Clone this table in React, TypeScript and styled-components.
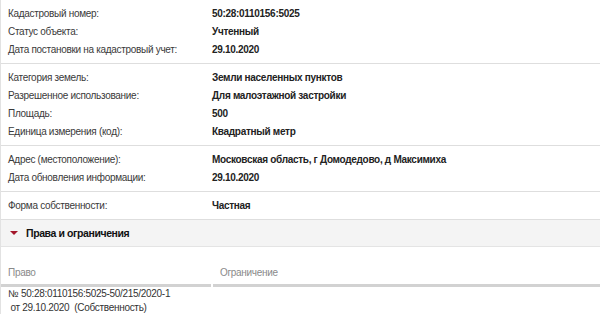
import React from 'react';
import styled, { createGlobalStyle } from 'styled-components';

const GlobalStyle = createGlobalStyle`
    body {
        margin: 0;
        background: #fff;
        font-family: 'Liberation Sans', Arial, sans-serif;
        letter-spacing: -0.3px;
    }
`;

const Page = styled.div`
    border-left: 1px solid #e2e2e2;
    width: 600px;
    box-sizing: border-box;
`;

const Group = styled.div`
    border-bottom: 1px solid #dedede;
    padding: 4px 0 5px;
`;

const Row = styled.div`
    display: grid;
    grid-template-columns: 204px 1fr;
    align-items: center;
    height: 18px;
    padding-left: 7px;
    font-size: 10px;
`;

const Label = styled.span`
    color: #3a3a3a;
`;

const Value = styled.span`
    color: #222;
    font-weight: bold;
`;

const SectionHeader = styled.div`
    display: flex;
    align-items: center;
    gap: 8px;
    height: 26px;
    padding-left: 9px;
    background: #f4f4f4;
    border-bottom: 1px solid #e4e4e4;
    font-size: 10.5px;
    letter-spacing: -0.4px;
    font-weight: bold;
    color: #111;
`;

const Triangle = styled.span`
    width: 0;
    height: 0;
    border-left: 4px solid transparent;
    border-right: 4px solid transparent;
    border-top: 4px solid #a3162a;
`;

const Table = styled.div`
    display: grid;
    grid-template-columns: 210px 1fr;
    column-gap: 2px;
    padding-top: 19px;
    font-size: 10px;
`;

const HeadCell = styled.div`
    color: #8a8a8a;
    padding: 0 0 4px 7px;
    line-height: 14px;
    border-bottom: 3px solid #d2d2d2;
`;

const Cell = styled.div`
    color: #333;
    padding: 0 0 3px 7px;
    line-height: 14px;
    border-bottom: 1px solid #dedede;
    white-space: pre;
`;

type Item = [string, string];

const groups: Item[][] = [
    [
        ['Кадастровый номер:', '50:28:0110156:5025'],
        ['Статус объекта:', 'Учтенный'],
        ['Дата постановки на кадастровый учет:', '29.10.2020'],
    ],
    [
        ['Категория земель:', 'Земли населенных пунктов'],
        ['Разрешенное использование:', 'Для малоэтажной застройки'],
        ['Площадь:', '500'],
        ['Единица измерения (код):', 'Квадратный метр'],
    ],
    [
        ['Адрес (местоположение):', 'Московская область, г Домодедово, д Максимиха'],
        ['Дата обновления информации:', '29.10.2020'],
    ],
    [['Форма собственности:', 'Частная']],
];

const App: React.FC = () => (
    <>
        <GlobalStyle />
        <Page>
            {groups.map((g, i) => (
                <Group key={i}>
                    {g.map(([label, value]) => (
                        <Row key={label}>
                            <Label>{label}</Label>
                            <Value>{value}</Value>
                        </Row>
                    ))}
                </Group>
            ))}
            <SectionHeader>
                <Triangle />
                Права и ограничения
            </SectionHeader>
            <Table>
                <HeadCell>Право</HeadCell>
                <HeadCell>Ограничение</HeadCell>
                <Cell>{'№ 50:28:0110156:5025-50/215/2020-1\n от 29.10.2020  (Собственность)'}</Cell>
                <Cell />
            </Table>
        </Page>
    </>
);

export default App;
